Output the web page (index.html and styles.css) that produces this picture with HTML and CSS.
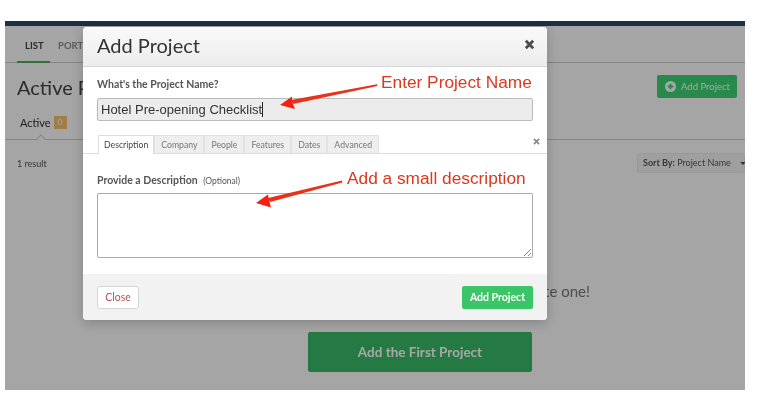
FILE: index.html
```html
<!DOCTYPE html>
<html lang="en">
<head>
  <meta charset="UTF-8">
  <meta name="viewport" content="width=device-width, initial-scale=1.0">
  <title>Add Project</title>
  <link rel="stylesheet" href="styles.css">
</head>
<body>
  <div class="shot">
    <div class="topbar"></div>

    <div class="page">
      <nav class="subnav">
        <a class="subnav-item active">LIST</a>
        <a class="subnav-item">PORTFOLIO</a>
      </nav>
      <div class="page-head">
        <h2>Active Projects</h2>
        <button class="btn-head">
          <svg class="plus" viewBox="0 0 12 12"><circle cx="6" cy="6" r="6" fill="#fff"/><path d="M6 3v6M3 6h6" stroke="#3dd475" stroke-width="2"/></svg>
          Add Project
        </button>
      </div>
      <div class="filter-row">
        <span>Active</span>
        <span class="count">0</span>
      </div>
      <div class="result-row">
        <span>1 result</span>
        <div class="sort"><b>Sort By:</b> Project Name <i class="caret"></i></div>
      </div>
      <div class="empty">
        <p>No projects yet, why not create one!</p>
        <button class="btn-first">Add the First Project</button>
      </div>
    </div>

    <div class="scrim"></div>

    <div class="modal">
      <div class="modal-head">
        <h1>Add Project</h1>
        <svg class="modal-x" viewBox="0 0 12 12"><path d="M2 2l8 8M10 2l-8 8" stroke="#4a4a4a" stroke-width="3"/></svg>
      </div>
      <div class="modal-body">
        <label class="name-label">What's the Project Name?</label>
        <div class="name-input">Hotel Pre-opening Checklist<span class="cursor"></span></div>
        <div class="tabs">
          <span class="tab current">Description</span>
          <span class="tab">Company</span>
          <span class="tab">People</span>
          <span class="tab">Features</span>
          <span class="tab">Dates</span>
          <span class="tab">Advanced</span>
          <svg class="tabs-x" viewBox="0 0 8 8"><path d="M1 1l6 6M7 1l-6 6" stroke="#8a8a8a" stroke-width="2"/></svg>
        </div>
        <label class="desc-label">Provide a Description <small>(Optional)</small></label>
        <div class="desc-input">
          <svg class="grip" viewBox="0 0 7 7"><path d="M0 7l7-7M4 7l3-3" stroke="#888" stroke-width="1"/></svg>
        </div>
      </div>
      <div class="modal-foot">
        <button class="btn-close">Close</button>
        <button class="btn-add">Add Project</button>
      </div>
    </div>

    <!-- annotations drawn on top of the screenshot -->
    <span class="note note-name">Enter Project Name</span>
    <span class="note note-desc">Add a small description</span>
    <svg class="arrows" viewBox="0 0 740 369">
      <path d="M372 63.2L372.4 65L288 83L286 79Z" fill="#e8321a"/>
      <path d="M275 84L287 75.5L287 81L290 88Z" fill="#f5200f"/>
      <path d="M337 159.6L337.4 161.4L265 181L263 177Z" fill="#e8321a"/>
      <path d="M251 182L263 173.5L264 179L266 186.5Z" fill="#f5200f"/>
    </svg>
  </div>
</body>
</html>
```

FILE: styles.css
```css
body {
  margin: 0;
  background: #fff;
  font-family: 'Lato', sans-serif;
}

.shot {
  position: relative;
  width: 740px;
  height: 369px;
  margin: 21px 0 0 5px;
  background: #fdfdfd;
  overflow: hidden;
  filter: blur(0.35px);
}

.topbar {
  height: 5px;
  background: #1d2f44;
}

/* Page behind the dialog */
.page {
  color: #333;
}

.subnav {
  display: flex;
  height: 37px;
  padding-left: 12px;
  border-bottom: 1px solid #ccc;
  box-sizing: border-box;
}

.subnav-item {
  padding: 14px 8px 0 8px;
  width: 33px;
  box-sizing: border-box;
  font-size: 9.5px;
  font-weight: 700;
  color: #8f8f8f;
}

.subnav-item.active {
  color: #444;
  border-bottom: 2px solid #4caf50;
  height: 37px;
}

.page-head {
  display: flex;
  justify-content: space-between;
  padding: 12px 8px 0 12px;
  height: 49px;
  box-sizing: border-box;
}

.page-head h2 {
  margin: 0;
  font-size: 20px;
  font-weight: 400;
  color: #444;
  line-height: 24px;
  white-space: nowrap;
}

.btn-head {
  display: flex;
  align-items: center;
  gap: 5px;
  width: 80px;
  height: 23px;
  padding: 0 0 0 8px;
  border: 0;
  border-radius: 2px;
  background: #3dd475;
  color: #fff;
  font-family: inherit;
  font-size: 9.5px;
}

.plus {
  width: 11px;
  height: 11px;
}

.filter-row {
  position: relative;
  display: flex;
  align-items: center;
  gap: 3px;
  height: 28px;
  padding: 0 0 6px 15px;
  box-sizing: border-box;
  border-bottom: 1px solid #ccc;
  font-size: 11px;
}

/* little notch under the active filter */
.filter-row::after {
  content: "";
  position: absolute;
  left: 33px;
  bottom: -1px;
  width: 5px;
  height: 5px;
  background: #fdfdfd;
  border: 1px solid #ccc;
  border-width: 1px 0 0 1px;
  transform: rotate(45deg) translate(1px, 1px);
}

.count {
  width: 13px;
  height: 13px;
  background: #f5c46a;
  color: #fff;
  font-size: 8px;
  text-align: center;
  line-height: 13px;
}

.result-row {
  display: flex;
  justify-content: space-between;
  align-items: center;
  padding: 13px 0 0 12px;
  font-size: 9px;
  color: #555;
}

.sort {
  width: 108px;
  height: 20px;
  box-sizing: border-box;
  padding: 3px 0 0 5px;
  border: 1px solid #ececec;
  border-radius: 3px;
  background: #f5f5f5;
  white-space: nowrap;
}

.caret {
  display: inline-block;
  margin-left: 7px;
  border: 3px solid transparent;
  border-top-color: #555;
  vertical-align: -2px;
}

.empty {
  width: 585px;
  padding-top: 108px;
}

.empty p {
  margin: 0 0 31px;
  font-size: 15px;
  line-height: 20px;
  color: #777;
  text-align: right;
}

.btn-first {
  display: block;
  width: 224px;
  height: 40px;
  margin-left: 303px;
  border: 0;
  border-radius: 2px;
  background: #3abb67;
  color: #fff;
  font-family: inherit;
  font-size: 13.5px;
  font-weight: 700;
}

.scrim {
  position: absolute;
  inset: 5px 0 0 0;
  background: rgba(0, 0, 0, 0.35);
}

/* Add Project dialog */
.modal {
  position: absolute;
  left: 78px;
  top: 6px;
  width: 464px;
  height: 293px;
  display: flex;
  flex-direction: column;
  background: #fff;
  border-radius: 4px;
  box-shadow: 0 3px 12px rgba(0, 0, 0, 0.2);
  overflow: hidden;
}

.modal-head {
  display: flex;
  justify-content: space-between;
  align-items: center;
  height: 40px;
  padding: 0 12px 4px 14px;
  flex: none;
  box-sizing: border-box;
  background: linear-gradient(#fafafa, #ececec);
  border-bottom: 1px solid #d5d5d5;
}

.modal-head h1 {
  margin: 0;
  font-size: 20px;
  font-weight: 400;
  color: #333;
}

.modal-x {
  width: 11px;
  height: 11px;
}

.modal-body {
  flex: 1;
  padding-top: 10px;
}

.name-label {
  display: block;
  padding-left: 14px;
  font-size: 10.5px;
  line-height: 15px;
  font-weight: 700;
  color: #555;
}

.name-input {
  display: flex;
  align-items: center;
  height: 23px;
  margin: 6px 14px 0;
  padding-left: 3px;
  box-sizing: border-box;
  background: #ececec;
  border: 1px solid #bbb;
  border-radius: 2px;
  font-family: 'Liberation Sans', sans-serif;
  font-size: 13px;
  color: #333;
}

.cursor {
  width: 1px;
  height: 15px;
  background: #222;
}

.tabs {
  position: relative;
  display: flex;
  height: 18px;
  margin-top: 14px;
  padding-left: 15px;
  border-bottom: 1px solid #ddd;
}

.tab {
  height: 18px;
  padding: 0 6px;
  box-sizing: border-box;
  background: #eee;
  border: 1px solid #e2e2e2;
  border-bottom: 0;
  font-size: 8.7px;
  line-height: 18px;
  color: #777;
}

.tab.current {
  height: 19px;
  padding: 0 5px;
  background: #fff;
  color: #444;
  border-color: #ddd;
}

.tabs-x {
  position: absolute;
  right: 7px;
  top: 3px;
  width: 7px;
  height: 7px;
}

.desc-label {
  display: block;
  margin-top: 19px;
  padding-left: 14px;
  font-size: 10.5px;
  line-height: 14px;
  font-weight: 700;
  color: #555;
}

.desc-label small {
  margin-left: 3px;
  font-size: 8.5px;
  font-weight: 400;
}

.desc-input {
  position: relative;
  height: 65px;
  margin: 5px 14px 0;
  box-sizing: border-box;
  border: 1px solid #aaa;
  border-radius: 2px;
}

.grip {
  position: absolute;
  right: 1px;
  bottom: 1px;
  width: 7px;
  height: 7px;
}

.modal-foot {
  display: flex;
  justify-content: space-between;
  align-items: center;
  height: 46px;
  padding: 0 14px;
  flex: none;
  box-sizing: border-box;
  background: #f2f2f2;
}

.btn-close {
  width: 42px;
  height: 23px;
  padding: 0;
  background: #fff;
  border: 1px solid #d5d5d5;
  border-radius: 3px;
  color: #b5505c;
  font-family: inherit;
  font-size: 10.5px;
}

.btn-add {
  width: 71px;
  height: 23px;
  padding: 0;
  border: 0;
  border-radius: 2px;
  background: #3cc568;
  color: #fff;
  font-family: inherit;
  font-size: 10.5px;
  font-weight: 700;
}

.note {
  position: absolute;
  font-family: 'Liberation Sans', sans-serif;
  font-size: 17.3px;
  line-height: 20px;
  color: #d9391f;
  white-space: nowrap;
}

.note-name {
  left: 376px;
  top: 51px;
}

.note-desc {
  left: 342px;
  top: 147px;
}

.arrows {
  position: absolute;
  left: 0;
  top: 0;
  width: 740px;
  height: 369px;
}
```
